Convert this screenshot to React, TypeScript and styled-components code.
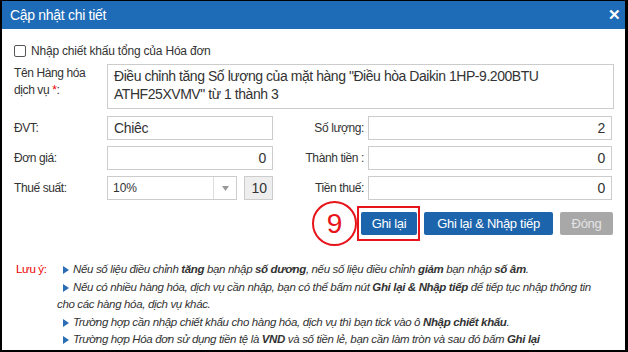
import React from "react";
import styled, { createGlobalStyle } from "styled-components";

const Global = createGlobalStyle`
  html, body { margin: 0; padding: 0; background: #fff; }
  body { font-family: "Liberation Sans", Arial, sans-serif; }
  * { box-sizing: border-box; }
`;

const Dialog = styled.div`
  width: 628px;
  height: 352px;
  border-style: solid;
  border-color: #000;
  border-width: 1px 3px 2px 2px;
  background: #fff;
  display: flex;
  flex-direction: column;
  overflow: hidden;
`;

const Header = styled.div`
  height: 28px;
  background: #1e6bb8;
  display: flex;
  align-items: center;
  justify-content: space-between;
  padding: 0 4px 0 8px;
  flex-shrink: 0;
`;

const Title = styled.div`
  color: #fff;
  font-size: 14px;
  letter-spacing: -0.3px;
`;

const Close = styled.div`
  color: #fff;
  font-size: 15px;
  font-weight: bold;
  width: 14px;
  text-align: center;
`;

const Body = styled.div`
  padding: 15px 11px 0 12px;
  display: flex;
  flex-direction: column;
  color: #333;
`;

const CheckRow = styled.label`
  display: flex;
  align-items: center;
  gap: 5px;
  font-size: 12px;
  letter-spacing: -0.2px;
  height: 14px;
`;

const Box = styled.span`
  width: 12px;
  height: 12px;
  border: 1px solid #555;
  border-radius: 2px;
  background: #fff;
  display: inline-block;
`;

const NameRow = styled.div`
  display: grid;
  grid-template-columns: 93px 1fr;
  margin-top: 6px;
`;

const Label = styled.div<{ $right?: boolean }>`
  font-size: 12px;
  letter-spacing: -0.4px;
  line-height: 17px;
  color: #333;
  text-align: ${(p) => (p.$right ? "right" : "left")};
  padding-right: ${(p) => (p.$right ? "4px" : "0")};
  align-self: center;
`;

const NameLabel = styled(Label)`
  align-self: start;
  padding-top: 1px;
  line-height: 17px;
`;

const Star = styled.span`
  color: #e00;
`;

const TextArea = styled.div`
  height: 45px;
  border: 1px solid #ccc;
  padding: 2px 6px;
  font-size: 14px;
  line-height: 18px;
  letter-spacing: -0.45px;
  color: #333;
`;

const Grid = styled.div`
  display: grid;
  grid-template-columns: 93px 166px 95px 244px;
  grid-auto-rows: 24px;
  row-gap: 6px;
  margin-top: 7px;
`;

const Input = styled.div<{ $align?: "left" | "right" }>`
  height: 24px;
  border: 1px solid #ccc;
  padding: 0 6px;
  font-size: 14px;
  display: flex;
  align-items: center;
  justify-content: ${(p) => (p.$align === "right" ? "flex-end" : "flex-start")};
  color: #333;
  letter-spacing: -0.3px;
`;

const TaxCell = styled.div`
  display: flex;
  gap: 7px;
`;

const Select = styled.div`
  width: 130px;
  height: 24px;
  border: 1px solid #ccc;
  display: flex;
  align-items: stretch;
  font-size: 12px;
  color: #333;
`;

const SelectText = styled.div`
  flex: 1;
  display: flex;
  align-items: center;
  padding-left: 5px;
`;

const SelectArrow = styled.div`
  width: 23px;
  border-left: 1px solid #ddd;
  display: flex;
  align-items: center;
  justify-content: center;
`;

const RateBox = styled.div`
  width: 29px;
  height: 24px;
  border: 1px solid #ccc;
  background: #eee;
  font-size: 14px;
  display: flex;
  align-items: center;
  justify-content: flex-end;
  padding-right: 5px;
  color: #333;
`;

const Buttons = styled.div`
  display: flex;
  justify-content: flex-end;
  gap: 7px;
  margin-top: 12px;
  padding-right: 1px;
`;

const Button = styled.div<{ $w: number; $disabled?: boolean }>`
  width: ${(p) => p.$w}px;
  height: 23px;
  background: ${(p) => (p.$disabled ? "#a8a8a8" : "#1c64ab")};
  color: ${(p) => (p.$disabled ? "#e4e4e4" : "#fff")};
  border-radius: 2px;
  font-size: 13px;
  letter-spacing: -0.3px;
  display: flex;
  align-items: center;
  justify-content: center;
`;

const Marked = styled.div`
  position: relative;
`;

const RedFrame = styled.div`
  position: absolute;
  left: -4px;
  top: -6px;
  width: 63px;
  height: 35px;
  border: 2px solid #e8141b;
`;

const Circle = styled.div`
  position: absolute;
  left: -49px;
  top: -11px;
  width: 45px;
  height: 45px;
  border-radius: 50%;
  border: 2px solid #e8141b;
  background: #fff;
  color: #e8141b;
  font-size: 28px;
  display: flex;
  align-items: center;
  justify-content: center;
`;

const Notes = styled.div`
  display: grid;
  grid-template-columns: 43px 1fr;
  margin-top: 26px;
  font-size: 11.5px;
  line-height: 17.5px;
  letter-spacing: -0.35px;
  color: #333;
  padding-right: 14px;
`;

const NoteLabel = styled.div`
  color: #e00;
  padding-left: 2px;
`;

const NoteLine = styled.div`
  font-style: italic;
  text-indent: 6px;
`;

const Tri = styled.span`
  display: inline-block;
  width: 0;
  height: 0;
  border-top: 4px solid transparent;
  border-bottom: 4px solid transparent;
  border-left: 6px solid #2a6db5;
  margin-right: 4px;
  vertical-align: -1px;
  text-indent: 0;
`;

export default function App() {
  return (
    <>
      <Global />
      <Dialog>
        <Header>
          <Title>Cập nhật chi tiết</Title>
          <Close>✕</Close>
        </Header>
        <Body>
          <CheckRow>
            <Box />
            Nhập chiết khấu tổng của Hóa đơn
          </CheckRow>
          <NameRow>
            <NameLabel>
              Tên Hàng hóa
              <br />
              dịch vụ <Star>*</Star>:
            </NameLabel>
            <TextArea>
              Điều chỉnh tăng Số lượng của mặt hàng "Điều hòa Daikin 1HP-9.200BTU ATHF25XVMV" từ 1 thành 3
            </TextArea>
          </NameRow>
          <Grid>
            <Label>ĐVT:</Label>
            <Input>Chiêc</Input>
            <Label $right>Số lượng:</Label>
            <Input $align="right">2</Input>

            <Label>Đơn giá:</Label>
            <Input $align="right">0</Input>
            <Label $right>Thành tiền :</Label>
            <Input $align="right">0</Input>

            <Label>Thuế suất:</Label>
            <TaxCell>
              <Select>
                <SelectText>10%</SelectText>
                <SelectArrow>
                  <svg width="7" height="5" viewBox="0 0 7 5">
                    <path d="M0 0 L7 0 L3.5 5 Z" fill="#999" />
                  </svg>
                </SelectArrow>
              </Select>
              <RateBox>10</RateBox>
            </TaxCell>
            <Label $right>Tiền thuế:</Label>
            <Input $align="right">0</Input>
          </Grid>
          <Buttons>
            <Marked>
              <RedFrame />
              <Circle>9</Circle>
              <Button $w={56}>Ghi lại</Button>
            </Marked>
            <Button $w={129}>Ghi lại &amp; Nhập tiếp</Button>
            <Button $w={53} $disabled>
              Đóng
            </Button>
          </Buttons>
          <Notes>
            <NoteLabel>Lưu ý:</NoteLabel>
            <div>
              <NoteLine>
                <Tri />
                Nếu số liệu điều chỉnh <b>tăng</b> bạn nhập <b>số dương</b>, nếu số liệu điều chỉnh <b>giảm</b> bạn nhập <b>số âm</b>.
              </NoteLine>
              <NoteLine>
                <Tri />
                Nếu có nhiều hàng hóa, dịch vụ cần nhập, bạn có thể bấm nút <b>Ghi lại &amp; Nhập tiếp</b> để tiếp tục nhập thông tin cho các hàng hóa, dịch vụ khác.
              </NoteLine>
              <NoteLine>
                <Tri />
                Trường hợp cần nhập chiết khấu cho hàng hóa, dịch vụ thì bạn tick vào ô <b>Nhập chiết khấu</b>.
              </NoteLine>
              <NoteLine>
                <Tri />
                Trường hợp Hóa đơn sử dụng tiền tệ là <b>VND</b> và số tiền lẻ, bạn cần làm tròn và sau đó bấm <b>Ghi lại</b>
              </NoteLine>
            </div>
          </Notes>
        </Body>
      </Dialog>
    </>
  );
}
